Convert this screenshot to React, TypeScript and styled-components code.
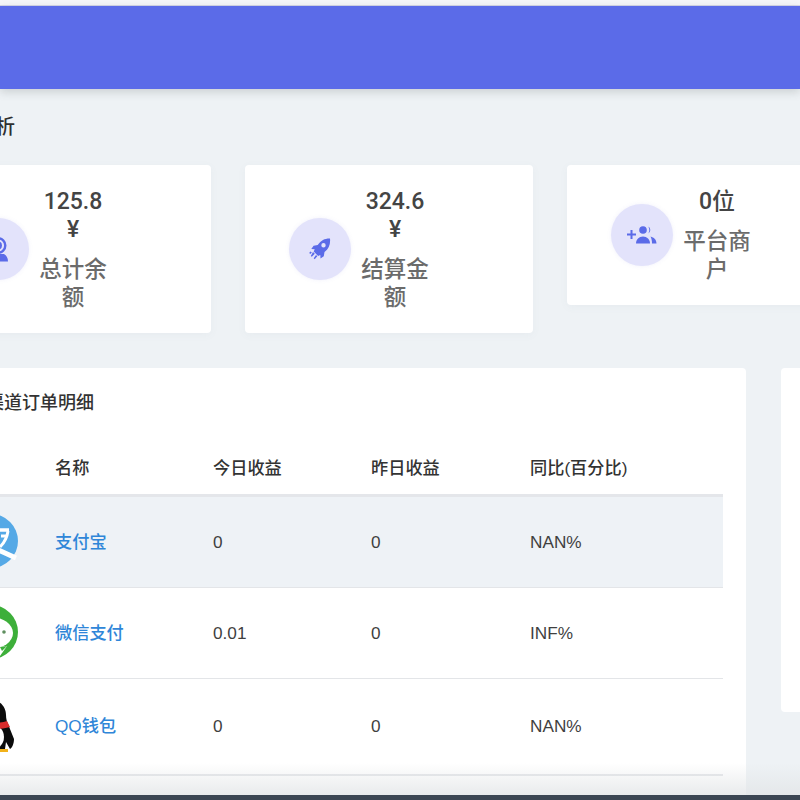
import React from 'react';
import styled, {createGlobalStyle} from 'styled-components';

const GlobalStyle = createGlobalStyle`
html, body {
  margin: 0;
  padding: 0;
  height: 800px;
  overflow: hidden;
  background: #eef2f5;
  font-family: "Liberation Sans", "Noto Sans CJK SC", sans-serif;
}
`;

const Screen = styled.div`
position: relative;
width: 800px;
height: 800px;
overflow: hidden;
background: #eef2f5;
`;

const TopStrip = styled.div`
height: 6px;
background: #f5f6f9;
border-bottom: 1px solid #d4d6e6;
box-sizing: border-box;
`;

const TopBand = styled.div`
height: 83px;
background-color: #5b6be8;
box-shadow: 0 3px 9px rgba(60, 70, 70, 0.2);
`;

const Main = styled.div`
width: 1000px;
margin-left: -77px;
`;

const PageTitle = styled.h1`
margin: 0;
padding: 24px 0 0 12px;
height: 52px;
font-size: 20px;
line-height: 28px;
font-weight: 500;
color: #2f2f2f;
`;

const CardRow = styled.div`
display: flex;
align-items: flex-start;
gap: 34px;
`;

const StatCard = styled.div`
width: 288px;
box-sizing: border-box;
background: #fff;
border-radius: 4px;
padding: 23px 0 21px 44px;
display: flex;
align-items: center;
gap: 10px;
box-shadow: 0 2px 8px rgba(100, 110, 130, 0.05);
`;

const IconCircle = styled.div`
width: 62px;
height: 62px;
flex: none;
margin-bottom: 2px;
border-radius: 50%;
background: #e3e3fb;
display: flex;
align-items: center;
justify-content: center;
color: #5b6be8;
box-shadow: 0 0 4px rgba(120, 120, 220, 0.1);
`;

const StatText = styled.div`
width: 68px;
text-align: center;
`;

const StatValue = styled.div`
font-family: Roboto, "Noto Sans CJK SC", sans-serif;
font-size: 23px;
line-height: 28px;
font-weight: 500;
color: #444;
`;

const StatLabel = styled.div`
margin-top: 12px;
font-size: 22.5px;
line-height: 28px;
font-weight: 500;
color: #6b6b6b;
`;

const Lower = styled.div`
display: flex;
align-items: flex-start;
gap: 35px;
margin-top: 35px;
`;

const TableCard = styled.div`
width: 823px;
height: 500px;
flex: none;
background: #fff;
border-radius: 4px;
padding: 24px 23px 0;
box-sizing: border-box;
`;

const SideCard = styled.div`
width: 200px;
height: 344px;
flex: none;
background: #fff;
border-radius: 4px;
`;

const TableTitle = styled.h2`
margin: 0;
padding-left: 4px;
font-size: 18px;
line-height: 22px;
font-weight: 500;
color: #333;
`;

const HeadWrap = styled.div`
margin-top: 24px;
`;

const Row = styled.div<{$head?: boolean; $active?: boolean; $height: number; $line?: number}>`
display: grid;
grid-template-columns: 109px 158px 158px 159px 1fr;
align-items: center;
height: ${p => p.$height}px;
box-sizing: border-box;
font-size: 17.2px;
color: ${p => (p.$head ? '#333' : '#3f3f3f')};
font-weight: ${p => (p.$head ? 500 : 400)};
background: ${p => (p.$active ? '#eef2f6' : 'transparent')};
border-bottom: ${p => p.$line ?? 1}px solid ${p => (p.$head ? '#e4e6ea' : '#e3e5e8')};
`;

const LogoCell = styled.div`
display: flex;
justify-content: flex-end;
padding-right: 37px;
margin-bottom: 2px;
`;

const NameLink = styled.a`
color: #2f86d8;
font-weight: 500;
margin-bottom: 4px;
text-decoration: none;
`;

const BottomFade = styled.div`
position: absolute;
left: 0;
right: 0;
bottom: 5px;
height: 32px;
background: linear-gradient(to bottom, rgba(225, 228, 230, 0), rgba(225, 228, 230, 0.75));
pointer-events: none;
`;

const BottomBar = styled.div`
position: absolute;
left: 0;
right: 0;
bottom: 0;
height: 5px;
background: #3b4653;
`;

const TargetIcon = () => (
  <svg width="22" height="26" viewBox="0 0 22 26" fill="none">
    <circle cx="11" cy="9.500" r="7.300" stroke="currentColor" strokeWidth="2.400" />
    <circle cx="11" cy="9.500" r="3" stroke="currentColor" strokeWidth="2" />
    <path d="M1 25.500c0-3.500 1.500-6 4-7.500h12c2.500 1.500 4 4 4 7.500z" fill="currentColor" />
  </svg>
);

const RocketIcon = () => (
  <svg width="24" height="24" viewBox="0 0 24 24">
    <path
      fill="currentColor"
      fillRule="evenodd"
      d="M22 1.500c.6 5.500-1 10-5.500 13.500l-.7 4.200-3.300 2.300-.2-3.600-2.200 1-4.400-4.400 1-2.200-3.400-.2 2.300-3.300 4.100-.7C13.200 3.200 17 1.300 22 1.500zM15.500 6a2.200 2.200 0 1 0 0 4.400 2.200 2.200 0 0 0 0-4.400z"
    />
    <path fill="currentColor" d="M5 15l1.800 1.800-3 3-1-.8zM8 18l1.300 1.300-2.600 3-1-1zM2.200 14.500l1.700.9-1.700 1.600-.9-.9z" />
  </svg>
);

const AddGroupIcon = () => (
  <svg width="30" height="18" viewBox="0 0 30 18">
    <path fill="currentColor" d="M0 7.500h3.500V4h2v3.500H9v2H5.500V13h-2V9.500H0z" />
    <circle cx="16" cy="4" r="3.800" fill="currentColor" />
    <path fill="currentColor" d="M9 17.500c0-4 3-7 7-7s7 3 7 7z" />
    <path fill="currentColor" d="M21 .5a3.800 3.800 0 0 1 0 7c1-1 1.300-2.200 1.300-3.500S22 1.500 21 .5z" />
    <path fill="currentColor" d="M23.500 10.500c3.500.8 6 3.300 6 7H25c0-2.800-.5-5-1.500-7z" />
  </svg>
);

const AlipayLogo = () => (
  <svg width="54" height="54" viewBox="0 0 54 54">
    <circle cx="27" cy="27" r="27" fill="#55a9e6" />
    <path d="M12 16h33" stroke="#fff" strokeWidth="3.500" fill="none" />
    <path d="M44 17c-1 7-4 12-8 16" stroke="#fff" strokeWidth="3" fill="none" />
    <path d="M37 22h6" stroke="#fff" strokeWidth="3" fill="none" />
    <path d="M6 32c16-4 32 6 46 12" stroke="#fff" strokeWidth="5" fill="none" />
  </svg>
);

const WechatLogo = () => (
  <svg width="54" height="54" viewBox="0 0 54 54">
    <circle cx="27" cy="27" r="27" fill="#3daf3a" />
    <ellipse cx="27" cy="28" rx="22" ry="16" fill="#fff" />
    <path d="M28 42l8 9 7-10z" fill="#fff" />
    <path d="M36 42l2 4 5-5z" fill="#3daf3a" />
    <circle cx="40" cy="27" r="1.800" fill="#5e8f5e" />
    <circle cx="14" cy="27" r="1.800" fill="#5e8f5e" />
  </svg>
);

const QQLogo = () => (
  <svg width="50" height="54" viewBox="0 0 50 54">
    <path
      d="M23 1C32 1 38 8 38 16c0 4 1 7 2 9l6 15c0 5-2 9-4 10l-4-7-1 7H9l-1-7-4 7c-2-1-4-5-4-10l6-15c1-2 2-5 2-9C8 8 14 1 23 1z"
      fill="#0b0b0b"
    />
    <ellipse cx="23" cy="38" rx="13" ry="13" fill="#fff" />
    <path d="M7 22c9 3 23 3 32 0l3 6c-9 3-29 3-38 0z" fill="#d92b2b" />
    <path d="M8 50h32v3H8z" fill="#f2b21b" />
  </svg>
);

const rows = [
  {name: '支付宝', today: '0', yesterday: '0', ratio: 'NAN%', logo: <AlipayLogo />, height: 91, active: true},
  {name: '微信支付', today: '0.01', yesterday: '0', ratio: 'INF%', logo: <WechatLogo />, height: 91},
  {name: 'QQ钱包', today: '0', yesterday: '0', ratio: 'NAN%', logo: <QQLogo />, height: 97, line: 2},
];

const App = () => {
  return (
    <Screen>
      <GlobalStyle />
      <TopStrip />
      <TopBand />
      <Main>
        <PageTitle>数据分析</PageTitle>
        <CardRow>
          <StatCard>
            <IconCircle><TargetIcon /></IconCircle>
            <StatText>
              <StatValue>125.8 ¥</StatValue>
              <StatLabel>总计余额</StatLabel>
            </StatText>
          </StatCard>
          <StatCard>
            <IconCircle><RocketIcon /></IconCircle>
            <StatText>
              <StatValue>324.6 ¥</StatValue>
              <StatLabel>结算金额</StatLabel>
            </StatText>
          </StatCard>
          <StatCard>
            <IconCircle><AddGroupIcon /></IconCircle>
            <StatText>
              <StatValue>0位</StatValue>
              <StatLabel>平台商户</StatLabel>
            </StatText>
          </StatCard>
        </CardRow>
        <Lower>
          <TableCard>
            <TableTitle>支付渠道订单明细</TableTitle>
            <HeadWrap>
              <Row $head $height={59} $line={3}>
                <span />
                <span>名称</span>
                <span>今日收益</span>
                <span>昨日收益</span>
                <span>同比(百分比)</span>
              </Row>
            </HeadWrap>
            {rows.map(r => (
              <Row key={r.name} $active={r.active} $height={r.height} $line={r.line}>
                <LogoCell>{r.logo}</LogoCell>
                <NameLink>{r.name}</NameLink>
                <span>{r.today}</span>
                <span>{r.yesterday}</span>
                <span>{r.ratio}</span>
              </Row>
            ))}
          </TableCard>
          <SideCard />
        </Lower>
      </Main>
      <BottomFade />
      <BottomBar />
    </Screen>
  );
};

export default App;
